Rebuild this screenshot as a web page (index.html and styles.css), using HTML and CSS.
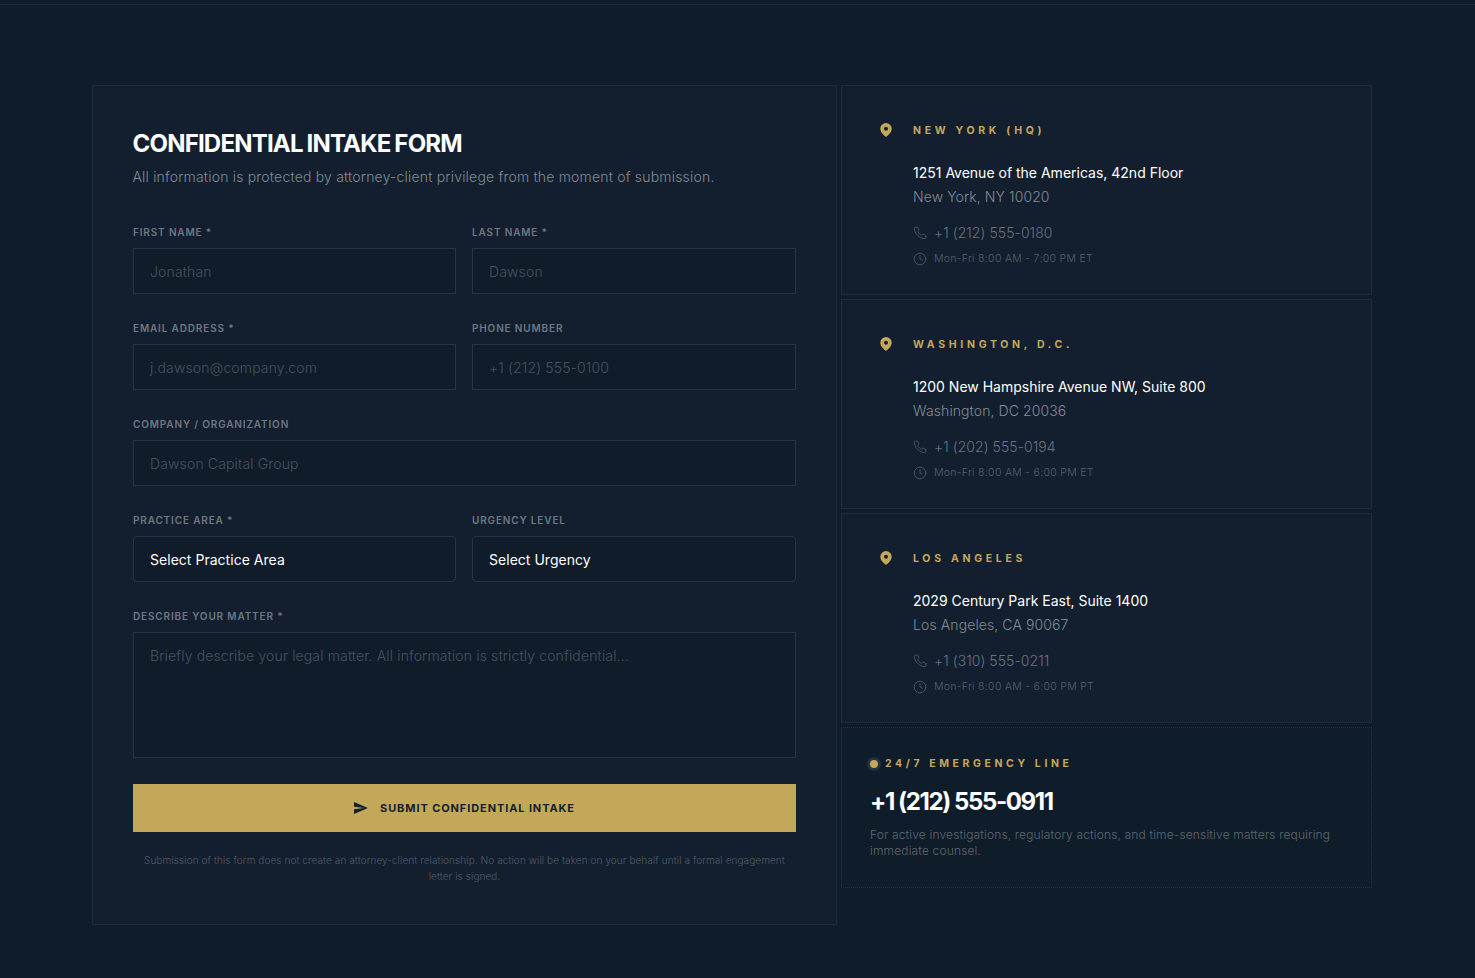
FILE: index.html
```html
<!DOCTYPE html>
<html lang="en">
<head>
    <meta charset="UTF-8">
    <meta name="viewport" content="width=device-width, initial-scale=1.0">
    <title>Confidential Intake</title>
    <link rel="stylesheet" href="styles.css">
</head>
<body>
    <div class="top-line"></div>

    <div class="contact-grid">
        <!-- Intake form -->
        <form class="intake-form">
            <h2>CONFIDENTIAL INTAKE FORM</h2>
            <p class="form-sub">All information is protected by attorney-client privilege from the moment of submission.</p>

            <div class="form-row">
                <div class="field">
                    <label for="first">FIRST NAME *</label>
                    <input id="first" type="text" placeholder="Jonathan">
                </div>
                <div class="field">
                    <label for="last">LAST NAME *</label>
                    <input id="last" type="text" placeholder="Dawson">
                </div>
            </div>
            <div class="form-row">
                <div class="field">
                    <label for="email">EMAIL ADDRESS *</label>
                    <input id="email" type="text" placeholder="j.dawson@company.com">
                </div>
                <div class="field">
                    <label for="phone">PHONE NUMBER</label>
                    <input id="phone" type="text" placeholder="+1 (212) 555-0100">
                </div>
            </div>
            <div class="field">
                <label for="company">COMPANY / ORGANIZATION</label>
                <input id="company" type="text" placeholder="Dawson Capital Group">
            </div>
            <div class="form-row">
                <div class="field">
                    <label for="area">PRACTICE AREA *</label>
                    <select id="area"><option>Select Practice Area</option></select>
                </div>
                <div class="field">
                    <label for="urgency">URGENCY LEVEL</label>
                    <select id="urgency"><option>Select Urgency</option></select>
                </div>
            </div>
            <div class="field">
                <label for="matter">DESCRIBE YOUR MATTER *</label>
                <textarea id="matter" placeholder="Briefly describe your legal matter. All information is strictly confidential..."></textarea>
            </div>

            <button type="button" class="submit-btn">
                <svg width="14" height="12" viewBox="2 3 21 18"><path d="M2.010 21 23 12 2.010 3 2 10l15 2-15 2z" fill="#131f2e"/></svg>
                SUBMIT CONFIDENTIAL INTAKE
            </button>
            <p class="form-note">Submission of this form does not create an attorney-client relationship. No action will be taken on your behalf until a formal engagement letter is signed.</p>
        </form>

        <!-- Offices -->
        <div class="side-col">
            <div class="office">
                <svg class="pin" width="12" height="14" viewBox="0 0 12 14"><path fill-rule="evenodd" d="M6 0a5.700 5.700 0 0 1 5.700 5.700c0 3.400-3.400 6.600-5.700 8.300C3.700 12.300.3 9.100.3 5.700A5.700 5.700 0 0 1 6 0Zm0 3.700a2 2 0 1 0 0 4 2 2 0 0 0 0-4Z" fill="#c4a85a"/></svg>
                <div class="office-body">
                    <div class="office-name">NEW YORK (HQ)</div>
                    <div class="office-street">1251 Avenue of the Americas, 42nd Floor</div>
                    <div class="office-city">New York, NY 10020</div>
                    <div class="office-phone">
                        <svg class="ico" width="14" height="14" viewBox="0 0 24 24"><path d="M22 16.900v3a2 2 0 0 1-2.200 2 19.800 19.800 0 0 1-8.600-3.100 19.500 19.500 0 0 1-6-6A19.800 19.800 0 0 1 2.100 4.200 2 2 0 0 1 4.100 2h3a2 2 0 0 1 2 1.700c.1 1 .4 1.900.7 2.800a2 2 0 0 1-.5 2.100L8.100 9.900a16 16 0 0 0 6 6l1.300-1.300a2 2 0 0 1 2.100-.4c.9.300 1.800.6 2.800.7a2 2 0 0 1 1.700 2Z"/></svg>
                        +1 (212) 555-0180
                    </div>
                    <div class="office-hours">
                        <svg class="ico" width="14" height="14" viewBox="0 0 24 24"><circle cx="12" cy="12" r="10"/><path d="M12 6v6l4 2"/></svg>
                        Mon-Fri 8:00 AM - 7:00 PM ET
                    </div>
                </div>
            </div>

            <div class="office">
                <svg class="pin" width="12" height="14" viewBox="0 0 12 14"><path fill-rule="evenodd" d="M6 0a5.700 5.700 0 0 1 5.700 5.700c0 3.400-3.400 6.600-5.700 8.300C3.700 12.300.3 9.100.3 5.700A5.700 5.700 0 0 1 6 0Zm0 3.700a2 2 0 1 0 0 4 2 2 0 0 0 0-4Z" fill="#c4a85a"/></svg>
                <div class="office-body">
                    <div class="office-name">WASHINGTON, D.C.</div>
                    <div class="office-street">1200 New Hampshire Avenue NW, Suite 800</div>
                    <div class="office-city">Washington, DC 20036</div>
                    <div class="office-phone">
                        <svg class="ico" width="14" height="14" viewBox="0 0 24 24"><path d="M22 16.900v3a2 2 0 0 1-2.200 2 19.800 19.800 0 0 1-8.600-3.100 19.500 19.500 0 0 1-6-6A19.800 19.800 0 0 1 2.100 4.200 2 2 0 0 1 4.100 2h3a2 2 0 0 1 2 1.700c.1 1 .4 1.900.7 2.800a2 2 0 0 1-.5 2.100L8.100 9.900a16 16 0 0 0 6 6l1.300-1.300a2 2 0 0 1 2.100-.4c.9.300 1.800.6 2.800.7a2 2 0 0 1 1.700 2Z"/></svg>
                        +1 (202) 555-0194
                    </div>
                    <div class="office-hours">
                        <svg class="ico" width="14" height="14" viewBox="0 0 24 24"><circle cx="12" cy="12" r="10"/><path d="M12 6v6l4 2"/></svg>
                        Mon-Fri 8:00 AM - 6:00 PM ET
                    </div>
                </div>
            </div>

            <div class="office">
                <svg class="pin" width="12" height="14" viewBox="0 0 12 14"><path fill-rule="evenodd" d="M6 0a5.700 5.700 0 0 1 5.700 5.700c0 3.400-3.400 6.600-5.700 8.300C3.700 12.300.3 9.100.3 5.700A5.700 5.700 0 0 1 6 0Zm0 3.700a2 2 0 1 0 0 4 2 2 0 0 0 0-4Z" fill="#c4a85a"/></svg>
                <div class="office-body">
                    <div class="office-name">LOS ANGELES</div>
                    <div class="office-street">2029 Century Park East, Suite 1400</div>
                    <div class="office-city">Los Angeles, CA 90067</div>
                    <div class="office-phone">
                        <svg class="ico" width="14" height="14" viewBox="0 0 24 24"><path d="M22 16.900v3a2 2 0 0 1-2.200 2 19.800 19.800 0 0 1-8.600-3.100 19.500 19.500 0 0 1-6-6A19.800 19.800 0 0 1 2.100 4.200 2 2 0 0 1 4.100 2h3a2 2 0 0 1 2 1.700c.1 1 .4 1.900.7 2.800a2 2 0 0 1-.5 2.100L8.100 9.900a16 16 0 0 0 6 6l1.300-1.300a2 2 0 0 1 2.100-.4c.9.300 1.800.6 2.800.7a2 2 0 0 1 1.700 2Z"/></svg>
                        +1 (310) 555-0211
                    </div>
                    <div class="office-hours">
                        <svg class="ico" width="14" height="14" viewBox="0 0 24 24"><circle cx="12" cy="12" r="10"/><path d="M12 6v6l4 2"/></svg>
                        Mon-Fri 8:00 AM - 6:00 PM PT
                    </div>
                </div>
            </div>

            <div class="emergency">
                <div class="emergency-label"><span class="dot"></span>24/7 EMERGENCY LINE</div>
                <div class="emergency-num">+1 (212) 555-0911</div>
                <p class="emergency-text">For active investigations, regulatory actions, and time-sensitive matters requiring immediate counsel.</p>
            </div>
        </div>
    </div>
</body>
</html>
```

FILE: styles.css
```css
/* General */
body {
    margin: 0;
    height: 978px;
    overflow: hidden;
    background-color: #0f1c29;
    font-family: "Inter", "Liberation Sans", sans-serif;
    color: #fff;
}

.top-line {
    height: 4px;
    border-bottom: 1px solid #1e2b3a;
    margin-bottom: 80px;
}

.contact-grid {
    display: grid;
    grid-template-columns: 745px 531px;
    gap: 4px;
    margin-left: 92px;
    width: 1280px;
    align-items: start;
}

/* Form */
.intake-form {
    box-sizing: border-box;
    height: 840px;
    padding: 44px 40px 0;
    background-color: #131f2e;
    border: 1px solid #1e2b3a;
}

.intake-form h2 {
    margin: 0 0 0 -0.5px;
    font-size: 24px;
    line-height: 28px;
    font-weight: 700;
    letter-spacing: -0.8px;
    word-spacing: -1px;
}

.form-sub {
    margin: 8px 0 36px -0.5px;
    font-size: 14px;
    line-height: 22px;
    font-weight: 300;
    color: #838b96;
    letter-spacing: 0.19px;
}

.form-row {
    display: grid;
    grid-template-columns: 323px 324px;
    gap: 16px;
}

.field {
    margin-bottom: 26px;
}

.field label {
    display: block;
    height: 16px;
    line-height: 16px;
    margin-bottom: 8px;
    font-size: 10px;
    font-weight: 600;
    letter-spacing: 0.85px;
    color: #6f7783;
}

input, select, textarea {
    display: block;
    box-sizing: border-box;
    width: 100%;
    height: 46px;
    padding: 0 16px;
    background-color: #101c2a;
    border: 1px solid #263342;
    border-radius: 0;
    outline: none;
    color: #fff;
    font-family: inherit;
    font-size: 14px;
    font-weight: 300;
    letter-spacing: 0.14px;
}

input::placeholder, textarea::placeholder {
    color: #48525e;
    opacity: 1;
}

select {
    appearance: none;
    border-radius: 4px;
    font-weight: 400;
    letter-spacing: 0.03px;
}

textarea {
    height: 126px;
    padding: 14px 16px;
    line-height: 18px;
    resize: none;
}

.submit-btn {
    display: flex;
    align-items: center;
    justify-content: center;
    gap: 12px;
    width: 100%;
    height: 48px;
    border: none;
    background-color: #c4a85a;
    color: #131f2e;
    font-family: inherit;
    font-size: 11px;
    font-weight: 700;
    letter-spacing: 0.9px;
    cursor: pointer;
}

.form-note {
    margin: 20px 0 0;
    padding: 0 8px;
    text-align: center;
    font-size: 10px;
    line-height: 16px;
    font-weight: 300;
    color: #525b67;
    letter-spacing: 0.08px;
}

/* Offices */
.side-col {
    display: flex;
    flex-direction: column;
    gap: 4px;
}

.office {
    box-sizing: border-box;
    height: 210px;
    display: flex;
    gap: 21px;
    padding: 36px 38px 0;
    background-color: #131f2e;
    border: 1px solid #1e2b3a;
}

.pin {
    margin-top: 1px;
    flex-shrink: 0;
}

.office-name {
    line-height: 16px;
    margin: 1px 0 22px;
    font-size: 10.5px;
    font-weight: 700;
    letter-spacing: 3.7px;
    color: #c4a85a;
}

.office-street {
    font-size: 14px;
    line-height: 24px;
    font-weight: 400;
    letter-spacing: 0;
}

.office-city {
    font-size: 14px;
    line-height: 24px;
    font-weight: 300;
    color: #838b96;
    letter-spacing: 0.1px;
}

.office-phone, .office-hours {
    display: flex;
    align-items: center;
    gap: 7px;
    font-weight: 300;
}

.office-phone {
    margin-top: 12px;
    font-size: 14px;
    line-height: 24px;
    color: #6a737e;
    letter-spacing: 0.05px;
}

.office-hours {
    margin-top: 2px;
    font-size: 10.5px;
    line-height: 24px;
    color: #565f6a;
    letter-spacing: 0.3px;
}

.ico {
    fill: none;
    stroke: #4f5863;
    stroke-width: 1.5;
    stroke-linecap: round;
    stroke-linejoin: round;
}

/* Emergency line */
.emergency {
    box-sizing: border-box;
    height: 161px;
    padding: 27px 28px 0;
    background-color: #0f1c29;
    border: 1px dotted #24313f;
}

.emergency-label {
    display: flex;
    align-items: center;
    gap: 7px;
    height: 16px;
    font-size: 10.5px;
    font-weight: 700;
    letter-spacing: 3.6px;
    color: #c4a85a;
}

.dot {
    width: 8px;
    height: 8px;
    margin-top: 2px;
    border-radius: 50%;
    background-color: #c4a85a;
    box-shadow: 0 0 0 3px #223040;
}

.emergency-num {
    margin-top: 13px;
    font-size: 24px;
    line-height: 36px;
    font-weight: 700;
    letter-spacing: -1.4px;
}

.emergency-text {
    margin: 7px 0 0;
    font-size: 12px;
    line-height: 16px;
    font-weight: 300;
    color: #5f6873;
    letter-spacing: 0.15px;
}
```
